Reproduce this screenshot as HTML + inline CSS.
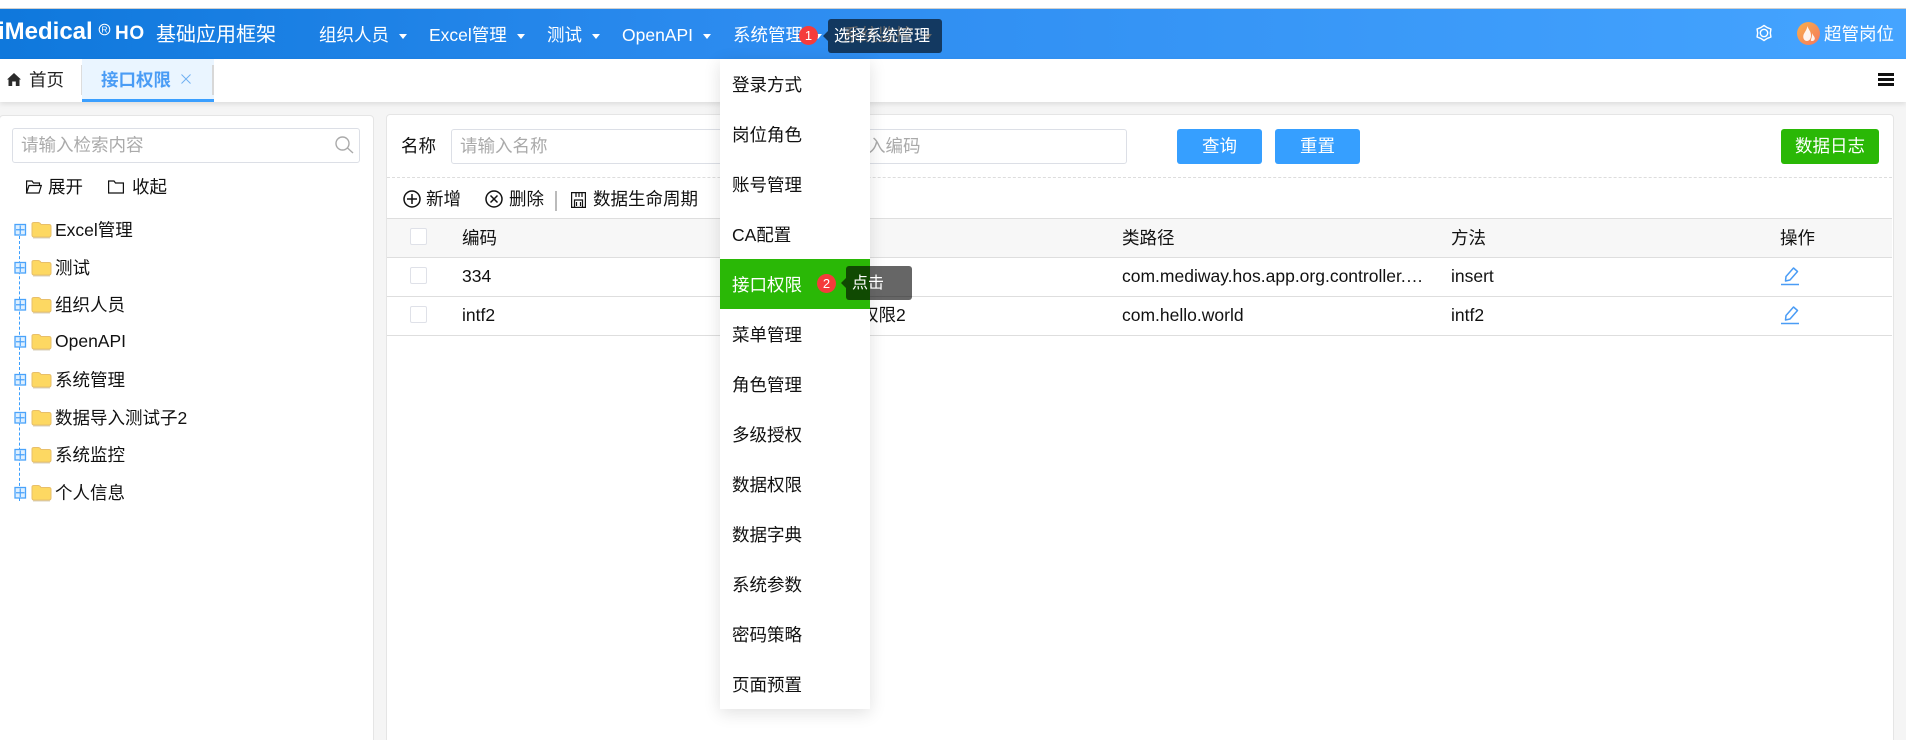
<!DOCTYPE html>
<html lang="zh"><head><meta charset="utf-8"><title>iMedical HO</title>
<style>
html,body{margin:0;padding:0;width:1906px;height:740px;overflow:hidden;background:#f5f5f5;font-family:"Liberation Sans","Noto Sans CJK SC",sans-serif;font-size:17.5px;color:#111}
#root{position:relative;width:1906px;height:740px;overflow:hidden}
.a{position:absolute}
.t{position:absolute;line-height:24px;height:24px;white-space:nowrap}
.w{color:#fff}
.ph{color:#aaa}
.line{position:absolute;left:387px;width:1505px;height:1px;background:#dedede}
.cb{position:absolute;left:410px;width:15px;height:15px;border:1px solid #dfe1e8;border-radius:2px;background:#fff}
.arrow{position:absolute;top:34px;width:0;height:0;border-left:4.5px solid transparent;border-right:4.5px solid transparent;border-top:5px solid #fff}
.inp{position:absolute;box-sizing:border-box;border:1px solid #dcdfe6;border-radius:3px;background:#fff}
.btn{position:absolute;top:129px;height:35px;line-height:34px;text-align:center;color:#fff;border-radius:3px;font-size:17.5px}
.mi{position:absolute;left:732px;line-height:24px;height:24px;white-space:nowrap;z-index:21}
.badge{position:absolute;width:19px;height:19px;border-radius:50%;background:#f53b3b;color:#fff;font-size:13px;line-height:19px;text-align:center;z-index:32}
.tip{position:absolute;background:rgba(0,0,0,.6);color:#fff;font-size:16px;border-radius:3px;z-index:31;height:34px;line-height:34px}
.tip:before{content:"";position:absolute;left:-5px;top:12px;border-top:5px solid transparent;border-bottom:5px solid transparent;border-right:5px solid rgba(0,0,0,.6)}
svg{position:absolute;overflow:visible}
</style></head><body><div id="root">
<div class="a" style="left:0;top:0;width:1906px;height:8px;background:#fff"></div>
<div class="a" style="left:0;top:8px;width:1906px;height:1px;background:#d0d0d0"></div>
<!-- header -->
<div class="a" style="left:0;top:9px;width:1906px;height:50px;background:linear-gradient(90deg,#0f78dc 0%,#2d8cf0 40%,#45a4ff 100%)"></div>
<div class="t w" style="left:-2px;top:20px;font-size:24px;font-weight:700">iMedical</div>
<svg style="left:98px;top:23px" width="13" height="13" viewBox="0 0 13 13" fill="none"><circle cx="6.500" cy="6.500" r="5.300" stroke="#fff" stroke-width="1"/><text x="6.500" y="9.500" font-size="8.500" fill="#fff" text-anchor="middle" font-family="Liberation Sans">R</text></svg>
<div class="t w" style="left:115px;top:22px;font-size:19px;font-weight:700;letter-spacing:.6px">HO</div>
<div class="t w" style="left:156px;top:23px;font-size:20px">基础应用框架</div>
<div class="t w" style="left:319px;top:23px">组织人员</div><div class="arrow" style="left:399px"></div>
<div class="t w" style="left:429px;top:23px">Excel管理</div><div class="arrow" style="left:517px"></div>
<div class="t w" style="left:547px;top:23px">测试</div><div class="arrow" style="left:592px"></div>
<div class="t w" style="left:622px;top:23px">OpenAPI</div><div class="arrow" style="left:703px"></div>
<div class="t w" style="left:733px;top:23px">系统管理</div><div class="arrow" style="left:814px"></div>
<div class="t w" style="left:843px;top:23px">系统监控</div><div class="arrow" style="left:924px"></div>
<svg style="left:1756px;top:25px" width="16" height="16" viewBox="0 0 16 16" fill="none" stroke="#fff" stroke-width="1.400" stroke-linejoin="round"><path d="M8 .5 11.150 2.540 14.930 4 14.300 8 14.930 12 11.150 13.460 8 15.500 4.850 13.460 1.070 12 1.700 8 1.070 4 4.850 2.540Z"/><circle cx="8" cy="8" r="3.700"/></svg>
<div class="a" style="left:1797px;top:22px;width:23px;height:23px;border-radius:50%;background:linear-gradient(135deg,#f9b04a,#f4775f)"></div>
<svg style="left:1803px;top:26px" width="12" height="15" viewBox="0 0 12 15" fill="#fff" opacity=".9"><path d="M4.500 0C5 3 8 5 8 9.500 8 13 6 15 4 15 1.500 15 0 12.800 .3 10 .6 7 3.500 5 4.500 0Z"/><path d="M9 7C9.500 9 11.800 10.500 11.800 12.500 11.800 14 10.500 15 9 15 7.800 15 7.500 14.500 8.300 12.500 9 10.800 9 9 9 7Z"/></svg>
<div class="t w" style="left:1824px;top:22px">超管岗位</div>
<!-- tabs -->
<div class="a" style="left:0;top:59px;width:1906px;height:43px;background:#fff;box-shadow:0 2px 5px rgba(0,0,0,.1)"></div>
<svg style="left:7px;top:73px" width="14" height="13" viewBox="0 0 14 13" fill="#2b2b2b"><path d="M7 0 14 6.500 12.500 6.500V13H8.800V8.500H5.200V13H1.500V6.500H0Z"/></svg>
<div class="t" style="left:29px;top:68px;color:#222">首页</div>
<div class="a" style="left:81px;top:65px;width:1px;height:30px;background:#ddd"></div>
<div class="a" style="left:82px;top:59px;width:132px;height:40px;background:#eaf5ff;border-bottom:3px solid #3a9fff"></div>
<div class="a" style="left:212px;top:65px;width:2px;height:30px;background:#d8d8d8"></div>
<div class="t" style="left:101px;top:68px;color:#4a9cf5;font-weight:700">接口权限</div>
<svg style="left:181px;top:74px" width="10" height="10" viewBox="0 0 10 10" stroke="#6fb0f2" stroke-width="1" fill="none"><path d="M.5.500 9.500 9.500M9.500.500 .5 9.500"/></svg>
<div class="a" style="left:1878px;top:73px;width:16px;height:3px;background:#111"></div>
<div class="a" style="left:1878px;top:78px;width:16px;height:3px;background:#111"></div>
<div class="a" style="left:1878px;top:83px;width:16px;height:3px;background:#111"></div>
<!-- left panel -->
<div class="a" style="left:-1px;top:115px;width:373px;height:640px;background:#fff;border:1px solid #e5e5e5;border-radius:4px"></div>
<div class="inp" style="left:12px;top:128px;width:348px;height:35px"></div>
<div class="t ph" style="left:21px;top:133px">请输入检索内容</div>
<svg style="left:335px;top:136px" width="19" height="18" viewBox="0 0 19 18" fill="none" stroke="#aaa" stroke-width="1.400"><circle cx="7.500" cy="7.500" r="6.500"/><path d="M12.500 12 18 17"/></svg>
<svg style="left:26px;top:180px" width="16" height="14" viewBox="0 0 16 14" fill="none" stroke="#111" stroke-width="1.200"><path d="M.6 13V1H6L7.500 3H13.500V5.500M.6 13H13L15.300 5.500H3L.6 13Z"/></svg>
<div class="t" style="left:48px;top:175px">展开</div>
<svg style="left:108px;top:180px" width="16" height="14" viewBox="0 0 16 14" fill="none" stroke="#111" stroke-width="1.200"><path d="M.6 13V1H6L7.500 3H15.400V13Z"/></svg>
<div class="t" style="left:132px;top:175px">收起</div>
<div class="a" style="left:19px;top:236px;width:0;height:265px;border-left:1px dashed #3a9fff"></div>
<svg style="left:0;top:0" width="373" height="520" fill="none">
<defs><g id="pl"><rect x="0" y="0" width="10.500" height="10.500" fill="#dff0ff" stroke="#4aa3fb" stroke-width="1.300"/><path d="M5.250 1V9.500M1 5.250H9.500" stroke="#4aa3fb" stroke-width="1.200"/><path d="M17 -.5Q17 -2 19 -2H23Q25 -2 26 0H34Q36 0 36 2V10.500Q36 12.500 34 12.500H19Q17 12.500 17 10.500Z" fill="#fdd862" stroke="#e8bf6a" stroke-width="1"/><path d="M18 13.500H35" stroke="#d8d0bd" stroke-width="1"/></g></defs>
<use href="#pl" x="15" y="224.500"/><use href="#pl" x="15" y="262.500"/><use href="#pl" x="15" y="299.500"/><use href="#pl" x="15" y="336.500"/><use href="#pl" x="15" y="374.500"/><use href="#pl" x="15" y="412.500"/><use href="#pl" x="15" y="449.500"/><use href="#pl" x="15" y="487.500"/>
</svg>
<div class="t" style="left:55px;top:218px">Excel管理</div>
<div class="t" style="left:55px;top:256px">测试</div>
<div class="t" style="left:55px;top:293px">组织人员</div>
<div class="t" style="left:55px;top:329px">OpenAPI</div>
<div class="t" style="left:55px;top:368px">系统管理</div>
<div class="t" style="left:55px;top:406px">数据导入测试子2</div>
<div class="t" style="left:55px;top:443px">系统监控</div>
<div class="t" style="left:55px;top:481px">个人信息</div>
<!-- right panel -->
<div class="a" style="left:386px;top:114px;width:1506px;height:640px;background:#fff;border:1px solid #e5e5e5;border-radius:4px"></div>
<div class="t" style="left:401px;top:134px">名称</div>
<div class="inp" style="left:451px;top:129px;width:300px;height:35px"></div>
<div class="t ph" style="left:460px;top:134px">请输入名称</div>
<div class="inp" style="left:824px;top:129px;width:303px;height:35px"></div>
<div class="t ph" style="left:833px;top:134px">请输入编码</div>
<div class="btn" style="left:1177px;width:85px;background:#369fff">查询</div>
<div class="btn" style="left:1275px;width:85px;background:#369fff">重置</div>
<div class="btn" style="left:1781px;width:98px;background:#2ab806">数据日志</div>
<div class="a" style="left:387px;top:177px;width:1505px;height:0;border-top:1px dashed #ddd"></div>
<svg style="left:403px;top:190px" width="18" height="18" viewBox="0 0 18 18" fill="none" stroke="#111" stroke-width="1.500"><circle cx="9" cy="9" r="8"/><path d="M9 4V14M4 9H14"/></svg>
<div class="t" style="left:426px;top:187px">新增</div>
<svg style="left:485px;top:190px" width="18" height="18" viewBox="0 0 18 18" fill="none" stroke="#111" stroke-width="1.500"><circle cx="9" cy="9" r="8"/><path d="M5.500 5.500 12.500 12.500M12.500 5.500 5.500 12.500"/></svg>
<div class="t" style="left:509px;top:187px">删除</div>
<div class="a" style="left:555px;top:191px;width:2px;height:20px;background:#bbb"></div>
<svg style="left:571px;top:192px" width="15" height="16" viewBox="0 0 15 16" fill="none" stroke="#111" stroke-width="1.200"><path d="M.6.600H14.400V15.400H.6Z"/><path d="M3.500 15V8H11.500V15M5 1V5M8 1V5M11 1V5M5.500 10V14M9.500 10V14"/></svg>
<div class="t" style="left:593px;top:187px">数据生命周期</div>
<!-- table -->
<div class="a" style="left:387px;top:219px;width:1505px;height:38px;background:#f7f7f7"></div>
<div class="line" style="top:218px"></div><div class="line" style="top:257px"></div><div class="line" style="top:296px"></div><div class="line" style="top:335px"></div>
<div class="cb" style="top:228px"></div><div class="cb" style="top:267px"></div><div class="cb" style="top:306px"></div>
<div class="t" style="left:462px;top:226px">编码</div>
<div class="t" style="left:1122px;top:226px">类路径</div>
<div class="t" style="left:1451px;top:226px">方法</div>
<div class="t" style="left:1780px;top:226px">操作</div>
<div class="t" style="left:462px;top:264px">334</div>
<div class="t" style="left:1122px;top:264px">com.mediway.hos.app.org.controller.…</div>
<div class="t" style="left:1451px;top:264px">insert</div>
<div class="t" style="left:462px;top:303px">intf2</div>
<div class="t" style="left:826px;top:303px">接口权限2</div>
<div class="t" style="left:1122px;top:303px">com.hello.world</div>
<div class="t" style="left:1451px;top:303px">intf2</div>
<svg style="left:1781px;top:267px" width="18" height="18" viewBox="0 0 18 18" fill="none" stroke="#4a9cf5" stroke-width="1.500"><path d="M5 9.500 12.500 1 16.500 4.500 9 13 4.500 14Z" stroke-linejoin="round"/><path d="M0 17.500H18"/></svg>
<svg style="left:1781px;top:306px" width="18" height="18" viewBox="0 0 18 18" fill="none" stroke="#4a9cf5" stroke-width="1.500"><path d="M5 9.500 12.500 1 16.500 4.500 9 13 4.500 14Z" stroke-linejoin="round"/><path d="M0 17.500H18"/></svg>
<!-- dropdown menu -->
<div class="a" style="left:720px;top:59px;width:150px;height:650px;background:#fff;box-shadow:0 4px 16px rgba(0,0,0,.12);z-index:20"></div>
<div class="a" style="left:720px;top:259px;width:150px;height:50px;background:#2ab806;z-index:20"></div>
<div class="mi" style="top:73px">登录方式</div>
<div class="mi" style="top:123px">岗位角色</div>
<div class="mi" style="top:173px">账号管理</div>
<div class="mi" style="top:223px">CA配置</div>
<div class="mi w" style="top:273px">接口权限</div>
<div class="mi" style="top:323px">菜单管理</div>
<div class="mi" style="top:373px">角色管理</div>
<div class="mi" style="top:423px">多级授权</div>
<div class="mi" style="top:473px">数据权限</div>
<div class="mi" style="top:523px">数据字典</div>
<div class="mi" style="top:573px">系统参数</div>
<div class="mi" style="top:623px">密码策略</div>
<div class="mi" style="top:673px">页面预置</div>
<!-- guide -->
<div class="badge" style="left:799px;top:26px">1</div>
<div class="tip" style="left:828px;top:19px;width:114px"><span style="position:absolute;left:6px;top:1px">选择系统管理</span></div>
<div class="badge" style="left:817px;top:274px">2</div>
<div class="tip" style="left:846px;top:266px;width:66px"><span style="position:absolute;left:6px;top:1px">点击</span></div>
</div></body></html>
